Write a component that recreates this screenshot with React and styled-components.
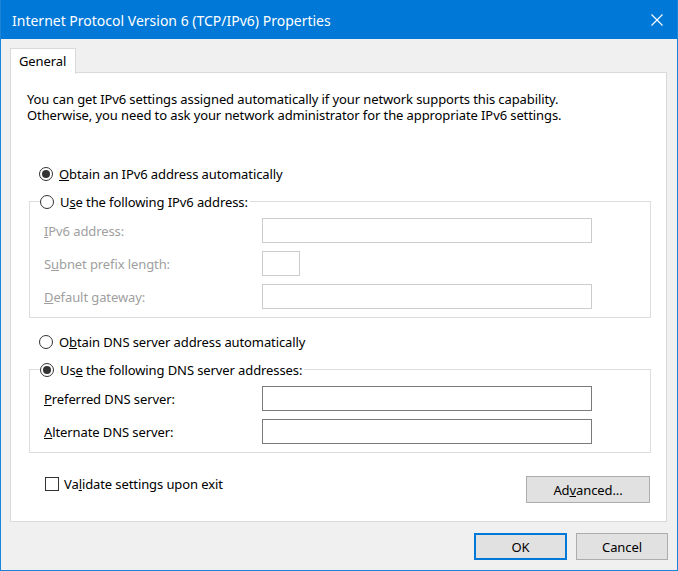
import React from "react";
import styled, { createGlobalStyle } from "styled-components";

const GlobalStyle = createGlobalStyle`
  html, body {
    margin: 0;
    padding: 0;
    background: #ffffff;
  }
  body {
    font-family: "Noto Sans", "Open Sans", sans-serif;
    font-size: 13px;
    letter-spacing: -0.1px;
    color: #000;
  }
  * { box-sizing: border-box; }
`;

function Radio({ checked, children }) {
  return (
    <RadioRow>
      <RadioCircle checked={checked} />
      <span>{children}</span>
    </RadioRow>
  );
}

function Field({ label, disabled, small }) {
  return (
    <FieldRow>
      <FieldLabel disabled={disabled}>{label}</FieldLabel>
      <TextBox disabled={disabled} small={small} />
    </FieldRow>
  );
}

export default function App() {
  return (
    <>
      <GlobalStyle />
      <Window>
        <TitleBar>
          <Title>Internet Protocol Version 6 (TCP/IPv6) Properties</Title>
          <CloseButton>
            <svg width="12" height="12" viewBox="0 0 12 12">
              <path d="M0.5 0.5 L11.5 11.5 M11.5 0.5 L0.5 11.5" stroke="#fff" strokeWidth="1.1" fill="none" />
            </svg>
          </CloseButton>
        </TitleBar>

        <Body>
          <TabStrip>
            <Tab>General</Tab>
          </TabStrip>
          <Panel>
            <Intro>
              You can get IPv6 settings assigned automatically if your network supports this capability.
              <br />
              Otherwise, you need to ask your network administrator for the appropriate IPv6 settings.
            </Intro>

            <Section>
              <OptionRow>
                <Radio checked><u>O</u>btain an IPv6 address automatically</Radio>
              </OptionRow>

              <GroupBox>
                <GroupHeader>
                  <Radio>U<u>s</u>e the following IPv6 address:</Radio>
                </GroupHeader>
                <Fields>
                  <Field disabled label={<><u>I</u>Pv6 address:</>} />
                  <Field disabled small label={<>S<u>u</u>bnet prefix length:</>} />
                  <Field disabled label={<><u>D</u>efault gateway:</>} />
                </Fields>
              </GroupBox>

              <OptionRow top={16}>
                <Radio>O<u>b</u>tain DNS server address automatically</Radio>
              </OptionRow>

              <GroupBox top={19}>
                <GroupHeader>
                  <Radio checked>Us<u>e</u> the following DNS server addresses:</Radio>
                </GroupHeader>
                <Fields>
                  <Field label={<><u>P</u>referred DNS server:</>} />
                  <Field label={<><u>A</u>lternate DNS server:</>} />
                </Fields>
              </GroupBox>

              <BottomRow>
                <CheckRow>
                  <CheckBox />
                  <span>Va<u>l</u>idate settings upon exit</span>
                </CheckRow>
                <AdvancedButton width={124}>Ad<u>v</u>anced...</AdvancedButton>
              </BottomRow>
            </Section>
          </Panel>

          <Footer>
            <Button width={93} primary>OK</Button>
            <Button width={92}>Cancel</Button>
          </Footer>
        </Body>
      </Window>
    </>
  );
}

const Window = styled.div`
  width: 678px;
  height: 571px;
  border: 1px solid #1a84d8;
  border-top: none;
  background: #f0f0f0;
  display: flex;
  flex-direction: column;
`;

const TitleBar = styled.div`
  height: 39px;
  background: #0078d7;
  display: flex;
  align-items: center;
  justify-content: space-between;
  flex-shrink: 0;
`;

const Title = styled.div`
  color: #ffffff;
  padding: 1px 0 0 11px;
  font-size: 14px;
  letter-spacing: 0;
`;

const CloseButton = styled.div`
  width: 40px;
  height: 39px;
  display: flex;
  align-items: center;
  justify-content: center;
`;

const Body = styled.div`
  flex: 1;
  padding: 9px 9px 0 9px;
  display: flex;
  flex-direction: column;
`;

const TabStrip = styled.div`
  display: flex;
  height: 25px;
  margin-bottom: -1px;
  position: relative;
  z-index: 1;
`;

const Tab = styled.div`
  width: 66px;
  height: 26px;
  background: #ffffff;
  border: 1px solid #d9d9d9;
  border-bottom: none;
  padding-left: 8px;
  line-height: 24px;
`;

const Panel = styled.div`
  height: 450px;
  margin-right: 1px;
  background: #ffffff;
  border: 1px solid #d9d9d9;
`;

const Intro = styled.p`
  margin: 0;
  padding: 18px 0 0 16px;
  line-height: 16px;
`;

const Section = styled.div`
  padding: 0 15px 0 18px;
`;

const OptionRow = styled.div`
  margin-top: ${(p) => p.top ?? 43}px;
  padding-left: 10px;
`;

const RadioRow = styled.div`
  display: flex;
  align-items: center;
  height: 16px;
  line-height: 16px;
  gap: 6px;
`;

const RadioCircle = styled.span`
  width: 14px;
  height: 14px;
  border-radius: 50%;
  border: 1px solid #333333;
  background: #ffffff;
  display: flex;
  align-items: center;
  justify-content: center;
  flex-shrink: 0;
  &::after {
    content: "";
    width: 8px;
    height: 8px;
    border-radius: 50%;
    background: ${(p) => (p.checked ? "#333333" : "transparent")};
  }
`;

const GroupBox = styled.div`
  margin-top: ${(p) => p.top ?? 19}px;
  border: 1px solid #dcdcdc;
  padding: 0 0 8px 14px;
`;

const GroupHeader = styled.div`
  margin: -8px 0 0 -4px;
  width: fit-content;
  background: #ffffff;
  padding-right: 2px;
`;

const Fields = styled.div`
  display: flex;
  flex-direction: column;
  gap: 8px;
  padding-top: 8px;
`;

const FieldRow = styled.div`
  display: flex;
  align-items: center;
`;

const FieldLabel = styled.div`
  width: 218px;
  color: ${(p) => (p.disabled ? "#a0a0a0" : "#000000")};
`;

const TextBox = styled.div`
  width: ${(p) => (p.small ? 38 : 330)}px;
  height: 25px;
  background: #ffffff;
  border: 1px solid ${(p) => (p.disabled ? "#cccccc" : "#7a7a7a")};
`;

const BottomRow = styled.div`
  margin-top: 23px;
  display: flex;
  justify-content: space-between;
  align-items: flex-start;
  padding-left: 16px;
`;

const CheckRow = styled.div`
  display: flex;
  align-items: center;
  gap: 5px;
  height: 16px;
  line-height: 16px;
`;

const CheckBox = styled.span`
  width: 14px;
  height: 14px;
  border: 1px solid #333333;
  background: #ffffff;
  flex-shrink: 0;
`;

const Button = styled.div`
  width: ${(p) => p.width}px;
  height: 27px;
  display: flex;
  align-items: center;
  justify-content: center;
  background: #e1e1e1;
  border: ${(p) => (p.primary ? "2px solid #0078d7" : "1px solid #adadad")};
`;

const AdvancedButton = styled(Button)`
  margin-right: 1px;
`;

const Footer = styled.div`
  display: flex;
  justify-content: flex-end;
  gap: 9px;
  padding-top: 11px;
`;
